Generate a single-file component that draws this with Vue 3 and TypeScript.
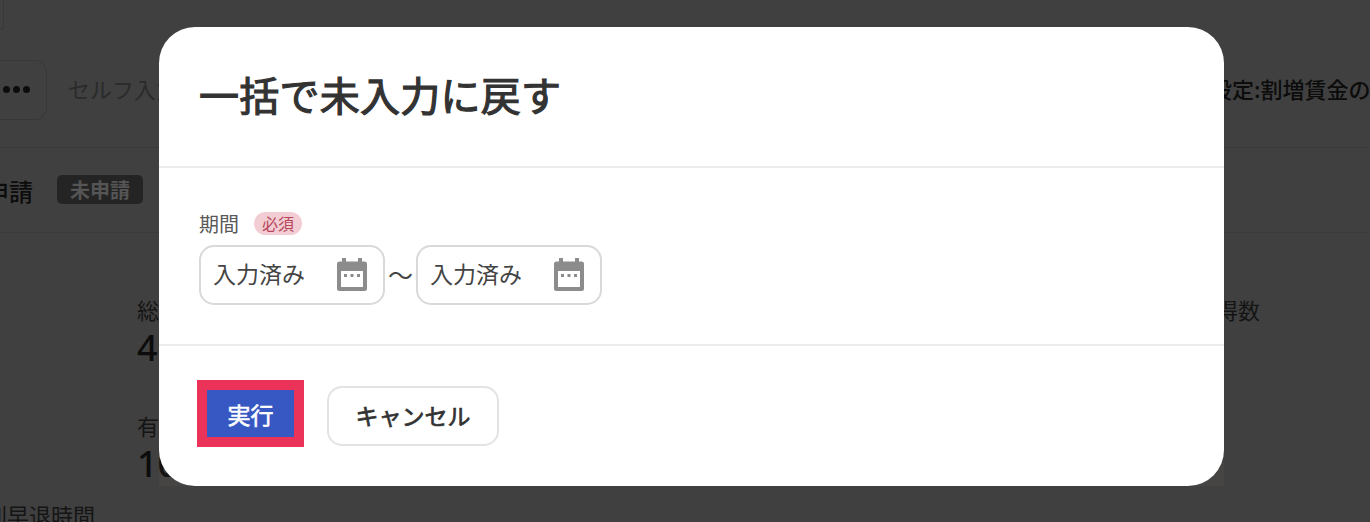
<script setup lang="ts">
	// background page is only visible around the dialog
	const stats_left = [
		{ label: "総労働時間", value: "4" },
		{ label: "有給取得数", value: "10" },
	];
</script>

<template>
	<div id="page">
		<div class="top-row">
			<div class="top-box"></div>
		</div>
		<div class="tool-row">
			<div class="more-button"><span></span><span></span><span></span></div>
			<span class="self-input">セルフ入力</span>
			<span class="setting-text">設定:割増賃金の計算</span>
		</div>
		<div class="apply-row">
			<span class="apply-title">申請</span>
			<span class="apply-badge">未申請</span>
		</div>
		<div class="stats-row">
			<div class="stats-left">
				<div v-for="stat in stats_left" :key="stat.label" class="stat">
					<div class="stat-label">{{ stat.label }}</div>
					<div class="stat-value">{{ stat.value }}</div>
				</div>
			</div>
			<div class="stat-right">取得数</div>
		</div>
		<div class="late-label">遅刻早退時間</div>

		<div id="overlay"></div>
		<div id="corner-tint"></div>

		<div id="dialog">
			<div class="dialog-header">
				<h1>一括で未入力に戻す</h1>
			</div>
			<div class="dialog-body">
				<div class="field-label">
					<span class="field-name">期間</span>
					<span class="required">必須</span>
				</div>
				<div class="date-range">
					<div v-for="n in 2" :key="n" class="date-wrap">
						<span v-if="n === 2" class="tilde">〜</span>
						<div class="date-input">
							<span class="date-text">入力済み</span>
							<svg class="date-icon" width="30" height="33" viewBox="0 0 30 33">
								<path
									fill="#8c8c8c"
									fill-rule="evenodd"
									d="M5 0h4v3.500h12v-3.500h4v3.500h2.500a2.500 2.500 0 0 1 2.500 2.500v24.500a2.500 2.500 0 0 1-2.500 2.500h-25a2.500 2.500 0 0 1-2.500-2.500v-24.500a2.500 2.500 0 0 1 2.500-2.500h2.500zM4 13v16h22v-16z"
								/>
								<rect x="7" y="16" width="3" height="3" fill="#8c8c8c" />
								<rect x="13.500" y="16" width="3" height="3" fill="#8c8c8c" />
								<rect x="20" y="16" width="3" height="3" fill="#8c8c8c" />
							</svg>
						</div>
					</div>
				</div>
			</div>
			<div class="dialog-footer">
				<div class="highlight">
					<button class="primary">実行</button>
				</div>
				<button class="secondary">キャンセル</button>
			</div>
		</div>
	</div>
</template>

<style scoped>
	#page {
		position: relative;
		width: 1370px;
		height: 522px;
		overflow: hidden;
		background-color: #fff;
		color: #333;
		font-family: "Noto Sans CJK JP", "Noto Sans", sans-serif;
	}

	#overlay {
		position: absolute;
		inset: 0;
		background-color: rgba(0, 0, 0, 0.75);
	}

	/* faint lighter patch left behind the lower corners of the dialog */
	#corner-tint {
		position: absolute;
		left: 159px;
		top: 462px;
		width: 1065px;
		height: 24px;
		background-color: rgba(255, 235, 205, 0.035);
	}

	.top-row {
		height: 30px;
	}

	.top-box {
		width: 3px;
		height: 29px;
		border: 1px solid #ddd;
		border-left: none;
		border-top: none;
		border-radius: 0 0 8px 0;
	}

	.tool-row {
		display: flex;
		align-items: center;
		height: 117px;
		border-bottom: 1px solid #e6e6e6;
		white-space: nowrap;
	}

	.more-button {
		display: flex;
		flex-shrink: 0;
		justify-content: flex-end;
		align-items: center;
		gap: 3px;
		box-sizing: border-box;
		width: 47px;
		height: 60px;
		margin-top: 2px;
		padding-right: 16px;
		border: 1px solid #ddd;
		border-left: none;
		border-radius: 0 12px 12px 0;
	}

	.more-button span {
		width: 7px;
		height: 7px;
		border-radius: 50%;
		background-color: #333;
	}

	.self-input {
		margin-left: 21px;
		margin-bottom: 2px;
		font-size: 22px;
		color: #aaa;
	}

	.setting-text {
		flex-shrink: 0;
		width: 218px;
		margin-left: auto;
		margin-right: -60px;
		margin-bottom: 2px;
		font-size: 22px;
		font-weight: 500;
		text-indent: -2px;
	}

	.apply-row {
		display: flex;
		align-items: center;
		gap: 24px;
		height: 84px;
		margin-left: -15px;
		border-bottom: 1px solid #e6e6e6;
	}

	.apply-title {
		font-size: 24px;
		font-weight: 500;
	}

	/* brighter than the dim layer allows, so it sits above it */
	.apply-badge {
		position: relative;
		z-index: 1;
		height: 29px;
		margin-bottom: 1px;
		padding: 0 13px;
		border-radius: 5px;
		background-color: #242424;
		color: #555;
		font-size: 20px;
		font-weight: 700;
		line-height: 29px;
	}

	.stats-row {
		display: flex;
		justify-content: space-between;
		box-sizing: border-box;
		height: 260px;
		padding: 60px 110px 0 137px;
	}

	.stats-left {
		display: flex;
		flex-direction: column;
		gap: 38px;
	}

	.stat-label,
	.stat-right {
		font-size: 22px;
		line-height: 32px;
		color: #555;
	}

	.stat-value {
		font-family: "Noto Sans", sans-serif;
		font-size: 36px;
		font-weight: 500;
		line-height: 46px;
		color: #333;
	}

	.late-label {
		margin-top: 5px;
		margin-left: -37px;
		font-size: 22px;
		line-height: 32px;
		color: #555;
		white-space: nowrap;
	}

	#dialog {
		position: absolute;
		left: 159px;
		top: 27px;
		display: flex;
		flex-direction: column;
		box-sizing: border-box;
		width: 1065px;
		height: 459px;
		border-radius: 36px;
		background-color: #fff;
	}

	.dialog-header {
		display: flex;
		align-items: center;
		box-sizing: border-box;
		height: 141px;
		padding: 0 40px 6px;
		border-bottom: 2px solid #ececec;
	}

	h1 {
		margin: 0;
		font-size: 40px;
		font-weight: 400;
		line-height: 1;
		letter-spacing: 0.25px;
		color: #333;
		-webkit-text-stroke: 1.2px #333;
	}

	.dialog-body {
		box-sizing: border-box;
		height: 178px;
		padding: 43px 40px 0;
		border-bottom: 2px solid #ececec;
	}

	.field-label {
		display: flex;
		align-items: center;
		gap: 15px;
		height: 26px;
		font-size: 20px;
		color: #595959;
	}

	.field-name {
		margin-bottom: 2px;
	}

	.required {
		width: 48px;
		height: 23px;
		margin-bottom: 2px;
		border-radius: 12px;
		background-color: #f2ced4;
		color: #b8475c;
		font-size: 16px;
		line-height: 23px;
		text-align: center;
	}

	.date-range {
		display: flex;
		margin-top: 8px;
	}

	.date-wrap {
		display: flex;
		align-items: center;
	}

	.tilde {
		width: 31px;
		margin-bottom: 2px;
		font-size: 25px;
		color: #444;
		text-align: center;
	}

	.date-input {
		display: flex;
		align-items: center;
		justify-content: space-between;
		box-sizing: border-box;
		width: 186px;
		height: 60px;
		padding: 0 16px 0 12px;
		border: 2px solid #d9d9d9;
		border-radius: 15px;
		font-size: 23px;
		color: #444;
	}

	.date-text {
		margin-bottom: 4px;
	}

	.date-icon {
		margin-bottom: 2px;
	}

	.dialog-footer {
		display: flex;
		align-items: flex-start;
		gap: 23px;
		flex: 1;
		padding: 34px 0 0 38px;
	}

	.highlight {
		padding: 10px;
		background-color: #eb3359;
	}

	.primary {
		display: block;
		width: 87px;
		height: 47px;
		padding: 0;
		border: none;
		background-color: #3758c3;
		color: #fff;
		font-family: inherit;
		font-size: 23px;
		font-weight: 400;
		-webkit-text-stroke: 0.6px #fff;
	}

	.secondary {
		width: 172px;
		height: 60px;
		margin-top: 6px;
		padding: 0 0 2px;
		border: 2px solid #e3e3e3;
		border-radius: 15px;
		background-color: #fff;
		color: #333;
		font-family: inherit;
		font-size: 23px;
		font-weight: 400;
		-webkit-text-stroke: 0.7px #333;
	}
</style>
